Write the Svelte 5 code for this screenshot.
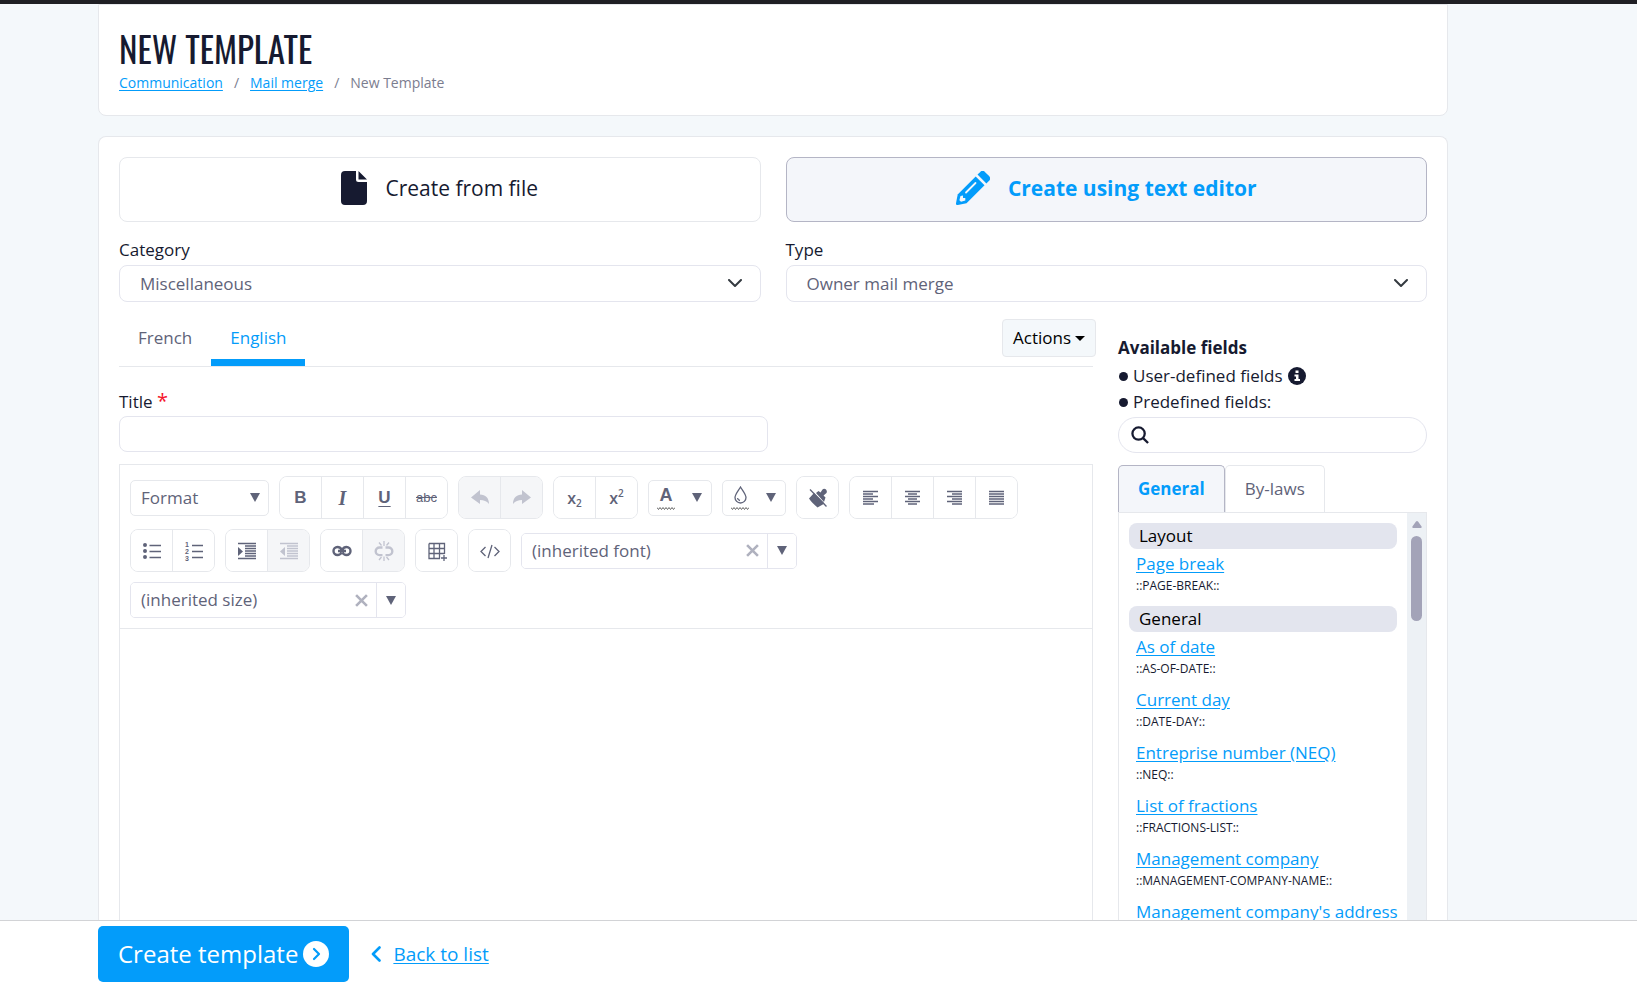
<script>
  let category = $state('Miscellaneous');
  let type = $state('Owner mail merge');
  let mode = $state('editor');
  let language = $state('English');
  let title = $state('');
  let search = $state('');
  let fieldTab = $state('General');

  const fieldGroups = [
    {
      name: 'Layout',
      fields: [{ label: 'Page break', code: '::PAGE-BREAK::' }]
    },
    {
      name: 'General',
      fields: [
        { label: 'As of date', code: '::AS-OF-DATE::' },
        { label: 'Current day', code: '::DATE-DAY::' },
        { label: 'Entreprise number (NEQ)', code: '::NEQ::' },
        { label: 'List of fractions', code: '::FRACTIONS-LIST::' },
        { label: 'Management company', code: '::MANAGEMENT-COMPANY-NAME::' },
        { label: "Management company's address" }
      ]
    }
  ];

  // stroke and fill paths on a 20x20 grid
  const icons = {
    undo: { fill: 'M1 9.5 10 2v4.500c5.500 0 9 3.500 9 9.500-2.500-3-5-4-9-4V16z' },
    redo: { fill: 'M19 9.500 10 2v4.500C4.500 6.500 1 10 1 16c2.500-3 5-4 9-4V16z' },
    bullets: {
      fill: 'M1 4a2 2 0 1 0 4 0a2 2 0 1 0-4 0M1 10a2 2 0 1 0 4 0a2 2 0 1 0-4 0M1 16a2 2 0 1 0 4 0a2 2 0 1 0-4 0',
      stroke: 'M7.500 4.500H19M7.500 10.500H19M7.500 16.500H19'
    },
    numbers: { stroke: 'M8 4.500H19M8 10.500H19M8 16.500H19' },
    indent: { fill: 'M1 6v9l5-4.500z', stroke: 'M1 2.500H19M8 5H19M8 7.500H19M8 10H19M8 12.500H19M8 15H19M1 17.500H19' },
    outdent: { fill: 'M6 6v9l-5-4.500z', stroke: 'M1 2.500H19M8 5H19M8 7.500H19M8 10H19M8 12.500H19M8 15H19M1 17.500H19' },
    link: {
      bold: 'M9.500 8.500C8.500 6.500 8 6 5.500 6a4 4 0 0 0 0 8c2.500 0 3-.5 4-2.500M10.500 8.500C11.500 6.500 12 6 14.500 6a4 4 0 0 1 0 8c-2.500 0-3-.5-4-2.500M6 10h8'
    },
    unlink: {
      bold: 'M8.500 6.500H5.500a3.800 3.800 0 0 0 0 7.600h3M11.500 6.500h3a3.800 3.800 0 0 1 0 7.600h-3',
      stroke: 'M10 0v5M5 1.500l2.500 3M15 1.500l-2.500 3M10 15.500v4.500M5 19l2.500-3M15 19l-2.500-3'
    },
    table: { stroke: 'M2 2.500H17.500V13M13 17.500H2V2.500M2 7.500H17.500M2 12.500H17.500M7 2.500V17.500M12.500 2.500V17.500M17 14v6M14 17h6' },
    code: { stroke: 'M5.500 6 1 10.500l4.500 4.500M14.500 6 19 10.500 14.500 15M12 4 8 17' },
    left: { stroke: 'M2 3.500H17M2 6H12M2 8.500H17M2 11H12M2 13.500H17M2 16H13' },
    center: { stroke: 'M2 3.500H17M5 6H14M2 8.500H17M5 11H14M2 13.500H17M5 16H14' },
    right: { stroke: 'M2 3.500H17M7 6H17M2 8.500H17M7 11H17M2 13.500H17M7 16H17' },
    justify: { stroke: 'M2 3.500H17M2 6H17M2 8.500H17M2 11H17M2 13.500H17M2 16H17' },
    clean: {
      fill: 'M1 10.500 6 5l10.500 10.500-7 4C7.500 17.500 5 16 1 10.500zM8 5l2.500-2 2 1.500 2-3c2-2 5.500.5 4 3.500l-3 2.500 2 2-1.500 4.500z',
      stroke: 'M2 1.500 18.500 18.500'
    }
  };

  const row = (names, disabled = []) => names.map((name) => ({ name, disabled: disabled.includes(name) }));
  const history = row(['undo', 'redo'], ['undo', 'redo']);
  const aligns = row(['left', 'center', 'right', 'justify']);
  const lists = row(['bullets', 'numbers']);
  const indents = row(['indent', 'outdent'], ['outdent']);
  const links = row(['link', 'unlink'], ['unlink']);
  const table = row(['table']);
  const code = row(['code']);
  const clean = row(['clean']);
</script>

{#snippet icon(name)}
  <svg class="icon" viewBox="0 0 20 20" aria-hidden="true">
    {#if icons[name].fill}<path d={icons[name].fill} fill="currentColor" />{/if}
    {#if icons[name].stroke}<path d={icons[name].stroke} fill="none" stroke="currentColor" stroke-width="1.3" />{/if}
    {#if icons[name].bold}<path d={icons[name].bold} fill="none" stroke="currentColor" stroke-width="2.4" />{/if}
    {#if name === 'numbers'}
      <g class="digits"><text x="1" y="6">1</text><text x="1" y="13">2</text><text x="1" y="20">3</text></g>
    {/if}
  </svg>
{/snippet}

{#snippet group(items)}
  <div class="group">
    {#each items as item}
      <button type="button" class="tool" disabled={item.disabled} aria-label={item.name}>{@render icon(item.name)}</button>
    {/each}
  </div>
{/snippet}

{#snippet triangle()}
  <svg class="triangle" viewBox="0 0 10 9" aria-hidden="true"><path d="M0 0h10L5 9z" fill="currentColor" /></svg>
{/snippet}

{#snippet wave()}
  <svg class="wave" viewBox="0 0 18 3" aria-hidden="true">
    <path d="M0 .5l1.500 2 1.500-2 1.500 2 1.500-2 1.500 2 1.500-2 1.500 2 1.500-2 1.500 2 1.500-2 1.500 2 1.500-2" fill="none" stroke="#666" stroke-width="1" />
  </svg>
{/snippet}

{#snippet combo(value, label)}
  <div class="combo">
    <input type="text" {value} aria-label={label} />
    <button type="button" class="clear" aria-label="clear">
      <svg viewBox="0 0 12 12" aria-hidden="true"><path d="M1 1l10 10M11 1 1 11" stroke="currentColor" stroke-width="2.400" /></svg>
    </button>
    <button type="button" class="open" aria-label="open">{@render triangle()}</button>
  </div>
{/snippet}

{#snippet chevron()}
  <svg class="chevron" viewBox="0 0 14 9" aria-hidden="true"><path d="M1 1l6 6 6-6" fill="none" stroke="#343a40" stroke-width="2" stroke-linecap="round" stroke-linejoin="round" /></svg>
{/snippet}

<div class="page">
  <div class="content">
    <header class="card heading">
      <h1>NEW TEMPLATE</h1>
      <nav class="breadcrumb">
        <a href="#communication">Communication</a>
        <span>/</span>
        <a href="#mail-merge">Mail merge</a>
        <span>/</span>
        <span>New Template</span>
      </nav>
    </header>

    <main class="card main">
      <div class="columns">
        <button type="button" class="mode" class:active={mode === 'file'} onclick={() => (mode = 'file')}>
          <svg class="file" viewBox="0 0 26 34" aria-hidden="true">
            <path d="M4 0h11v8.500A2.500 2.500 0 0 0 17.500 11H26v19a4 4 0 0 1-4 4H4a4 4 0 0 1-4-4V4a4 4 0 0 1 4-4zM17.500 0 26 8.500h-8.500z" fill="currentColor" />
          </svg>
          Create from file
        </button>
        <button type="button" class="mode" class:active={mode === 'editor'} onclick={() => (mode = 'editor')}>
          <svg class="pencil" viewBox="0 0 34 34" aria-hidden="true">
            <path d="M21.500 3.500 24.300.9a3.300 3.300 0 0 1 4.600 0l4.200 4.200a3.300 3.300 0 0 1 0 4.600l-2.700 2.700z" fill="currentColor" />
            <path d="M19.700 5.500l8.800 8.800L10.500 32.300l-8.700 1.700A1.600 1.600 0 0 1 0 32.200l1.700-8.700z" fill="currentColor" />
            <path d="M19.500 12 10 21.500" stroke="#f4f6fa" stroke-width="1.800" stroke-linecap="round" />
            <path d="M4.500 25 3.400 29.200l1.600 1.500 4.300-1.200V27H7v-2.500z" fill="#f4f6fa" />
          </svg>
          Create using text editor
        </button>

        <div class="field">
          <label for="category">Category</label>
          <div class="select">
            <select id="category" bind:value={category}><option>Miscellaneous</option></select>
            {@render chevron()}
          </div>
        </div>
        <div class="field">
          <label for="type">Type</label>
          <div class="select">
            <select id="type" bind:value={type}><option>Owner mail merge</option></select>
            {@render chevron()}
          </div>
        </div>
      </div>

      <div class="workspace">
        <section class="editor-side">
          <div class="language-bar">
            {#each ['French', 'English'] as name}
              <button type="button" class="language" class:active={language === name} onclick={() => (language = name)}>{name}</button>
            {/each}
            <button type="button" class="actions">
              Actions
              <svg viewBox="0 0 10 5" aria-hidden="true"><path d="M0 0h10L5 5z" fill="currentColor" /></svg>
            </button>
          </div>

          <label class="title-label" for="title">Title <span class="required">*</span></label>
          <input id="title" class="title-input" type="text" bind:value={title} />

          <div class="editor">
            <div class="toolbar">
              <div class="format">
                <select aria-label="Format"><option>Format</option></select>
                {@render triangle()}
              </div>
              <div class="group">
                <button type="button" class="tool bold">B</button>
                <button type="button" class="tool italic">I</button>
                <button type="button" class="tool underline">U</button>
                <button type="button" class="tool strike">abc</button>
              </div>
              {@render group(history)}
              <div class="group">
                <button type="button" class="tool script">x<sub>2</sub></button>
                <button type="button" class="tool script">x<sup>2</sup></button>
              </div>
              <button type="button" class="color" aria-label="Text color">
                <span class="swatch"><b>A</b>{@render wave()}</span>
                {@render triangle()}
              </button>
              <button type="button" class="color" aria-label="Background color">
                <span class="swatch">
                  <svg class="drop" viewBox="0 0 13 18" aria-hidden="true"><path d="M6.500 1C4 5 1 8.500 1 11.500a5.500 5.500 0 0 0 11 0C12 8.500 9 5 6.500 1zM3.500 12a3 3 0 0 0 2.500 2.500" fill="none" stroke="currentColor" stroke-width="1.300" /></svg>
                  {@render wave()}
                </span>
                {@render triangle()}
              </button>
              {@render group(clean)}
              {@render group(aligns)}
              {@render group(lists)}
              {@render group(indents)}
              {@render group(links)}
              {@render group(table)}
              {@render group(code)}
              {@render combo('(inherited font)', 'Font')}
              {@render combo('(inherited size)', 'Size')}
            </div>
            <div class="canvas" contenteditable="true" role="textbox" tabindex="0" aria-label="Template body"></div>
          </div>
        </section>

        <aside class="fields">
          <h2>Available fields</h2>
          <ul>
            <li>
              User-defined fields
              <svg class="info" viewBox="0 0 18 18" aria-hidden="true">
                <circle cx="9" cy="9" r="9" fill="#161a30" />
                <path d="M7.500 3.500h3V6h-3zM6.500 7.500h4v4.500H12v2H6.500v-2H8V9.500H6.500z" fill="#fff" />
              </svg>
            </li>
            <li>Predefined fields:</li>
          </ul>
          <div class="search">
            <svg viewBox="0 0 19 19" aria-hidden="true"><circle cx="8" cy="8" r="6.500" /><path d="M12.500 12.500l5.500 5.500" /></svg>
            <input type="text" aria-label="Search fields" bind:value={search} />
          </div>
          <div class="field-tabs">
            {#each ['General', 'By-laws'] as name}
              <button type="button" class="field-tab" class:active={fieldTab === name} onclick={() => (fieldTab = name)}>{name}</button>
            {/each}
          </div>
          <div class="panel">
            <div class="list">
              {#each fieldGroups as g}
                <h3>{g.name}</h3>
                {#each g.fields as f}
                  <div class="entry">
                    <a href="#field">{f.label}</a>
                    {#if f.code}<code>{f.code}</code>{/if}
                  </div>
                {/each}
              {/each}
            </div>
            <div class="scrollbar">
              <svg viewBox="0 0 10 7" aria-hidden="true"><path d="M5 0q.6 0 1 .6l3.600 5Q10 7 9 7H1Q0 7 .4 5.600L4 .6Q4.400 0 5 0z" fill="#a3a3b8" /></svg>
              <div class="thumb"></div>
            </div>
          </div>
        </aside>
      </div>
    </main>
  </div>

  <footer>
    <button type="submit" class="create">
      Create template
      <svg viewBox="0 0 26 26" aria-hidden="true"><circle cx="13" cy="13" r="13" fill="#fff" /><path d="M11 8l5 5-5 5" fill="none" stroke="#039cfa" stroke-width="2.200" stroke-linecap="round" stroke-linejoin="round" /></svg>
    </button>
    <a class="back" href="#list">
      <svg viewBox="0 0 10 16" aria-hidden="true"><path d="M8.500 1.500 2 8l6.500 6.500" fill="none" stroke="currentColor" stroke-width="2.600" stroke-linecap="round" stroke-linejoin="round" /></svg>
      <span>Back to list</span>
    </a>
  </footer>
</div>

<style>
  :global(body) {
    margin: 0;
    background: #f4f8fb;
  }

  .page {
    --line: #e6e8ec;
    --blue: #039cfa;
    --ink: #161a30;
    --muted: #5f6379;
    display: flex;
    flex-direction: column;
    box-sizing: border-box;
    height: 100vh;
    border-top: 4px solid #1f1f24;
    font-family: 'Open Sans', 'Noto Sans', sans-serif;
    font-size: 17px;
    line-height: 26px;
    color: var(--ink);
  }

  .page :global(*) {
    box-sizing: border-box;
  }

  button,
  input,
  select {
    margin: 0;
    padding: 0;
    font: inherit;
    color: inherit;
    background: #fff;
    border: 1px solid var(--line);
  }

  svg {
    display: block;
    flex: none;
  }

  a {
    color: var(--blue);
    text-underline-offset: 2px;
  }

  .content {
    display: flex;
    flex-direction: column;
    gap: 20px;
    flex: 1;
    min-height: 0;
    overflow: hidden;
    padding: 0 189px 0 98px;
  }

  .card {
    background: #fff;
    border: 1px solid var(--line);
    border-radius: 8px;
    padding: 20px;
  }

  .heading {
    flex: none;
    border-radius: 0 0 8px 8px;
  }

  h1 {
    margin: 0;
    font-family: Oswald, 'Liberation Sans Narrow', 'Roboto Condensed', 'DejaVu Sans Condensed', sans-serif;
    font-size: 35px;
    line-height: 46px;
    font-weight: 400;
  }

  .breadcrumb {
    display: flex;
    gap: 11px;
    font-size: 14px;
    line-height: 24px;
    color: #7b7d8f;
  }

  .main {
    display: flex;
    flex-direction: column;
    flex: 1;
    min-height: 0;
    border-bottom: 0;
    border-radius: 8px 8px 0 0;
    padding-bottom: 0;
  }

  .columns {
    display: grid;
    grid-template-columns: 1fr 1fr;
    column-gap: 25px;
    row-gap: 14px;
  }

  .mode {
    display: flex;
    align-items: center;
    justify-content: center;
    gap: 18px;
    height: 65px;
    padding-bottom: 4px;
    border-radius: 8px;
    font-size: 21px;
  }

  .mode.active {
    color: var(--blue);
    font-weight: 700;
    background: #f4f6fa;
    border-color: #b4b5c5;
  }

  .file {
    width: 26px;
    height: 34px;
  }

  .pencil {
    width: 34px;
    height: 34px;
  }

  .field label {
    display: block;
    margin-bottom: 2px;
    line-height: 27px;
  }

  .select,
  .format {
    display: grid;
    align-items: center;
  }

  .select > :global(*),
  .format > :global(*) {
    grid-area: 1 / 1;
  }

  .select select {
    width: 100%;
    height: 37px;
    padding: 0 20px;
    appearance: none;
    border-color: #e4e5ee;
    border-radius: 8px;
    color: var(--muted);
  }

  .chevron {
    justify-self: end;
    width: 14px;
    height: 9px;
    margin-right: 19px;
    pointer-events: none;
  }

  .workspace {
    display: grid;
    grid-template-columns: minmax(0, 974px) minmax(0, 309px);
    justify-content: space-between;
    flex: 1;
    min-height: 0;
    padding-top: 17px;
  }

  .editor-side {
    display: flex;
    flex-direction: column;
    min-height: 0;
  }

  .language-bar {
    display: flex;
    align-items: flex-start;
    height: 48px;
    border-bottom: 1px solid var(--line);
  }

  .language {
    height: 47px;
    padding: 0 19px 9px;
    border: 0;
    color: var(--muted);
  }

  .language.active {
    padding-bottom: 2px;
    border-bottom: 7px solid var(--blue);
    color: var(--blue);
  }

  .actions {
    display: flex;
    align-items: center;
    gap: 4px;
    height: 38px;
    margin: 0 -3px 0 auto;
    padding: 0 10px;
    background: #f4f8fb;
    border-radius: 4px;
    color: #000;
  }

  .actions svg {
    width: 10px;
    height: 5px;
  }

  .title-label {
    padding-top: 20px;
    line-height: 29px;
  }

  .required {
    color: #f5132b;
    font-size: 20px;
    line-height: 20px;
  }

  .title-input {
    width: 649px;
    max-width: 100%;
    height: 36px;
    padding: 0 12px;
    border-color: #e4e5ee;
    border-radius: 8px;
  }

  .editor {
    display: flex;
    flex-direction: column;
    flex: 1;
    min-height: 0;
    margin-top: 12px;
    border: 1px solid var(--line);
    border-bottom: 0;
    color: var(--muted);
  }

  .toolbar {
    display: flex;
    flex-wrap: wrap;
    align-items: center;
    gap: 10px;
    padding: 11px 10px 10px;
    border-bottom: 1px solid var(--line);
  }

  .format select {
    width: 139px;
    height: 36px;
    padding: 0 10px;
    appearance: none;
    border-radius: 5px;
  }

  .triangle {
    width: 10px;
    height: 9px;
  }

  .format :global(.triangle) {
    justify-self: end;
    margin-right: 9px;
    pointer-events: none;
  }

  .group {
    display: flex;
    border: 1px solid var(--line);
    border-radius: 8px;
    overflow: hidden;
  }

  .tool {
    display: flex;
    align-items: center;
    justify-content: center;
    width: 41px;
    height: 41px;
    border: 0;
  }

  .tool + .tool {
    width: 42px;
    border-left: 1px solid var(--line);
  }

  .tool:disabled {
    color: #c1c3cf;
    background: #f5f6f8;
  }

  .icon {
    width: 20px;
    height: 20px;
  }

  .digits {
    font-family: 'Liberation Sans', sans-serif;
    font-size: 7px;
    font-weight: 700;
    fill: currentColor;
  }

  .bold,
  .underline {
    font-family: 'Liberation Sans', sans-serif;
    font-weight: 700;
  }

  .underline {
    text-decoration: underline;
    text-underline-offset: 3px;
  }

  .italic {
    font-family: 'Liberation Serif', serif;
    font-size: 20px;
    font-style: italic;
    font-weight: 700;
  }

  .strike {
    font-family: 'Liberation Sans', sans-serif;
    font-size: 13px;
    text-decoration: line-through;
  }

  .script {
    font-size: 16px;
    font-weight: 600;
  }

  .script sub,
  .script sup {
    font-size: 10px;
    line-height: 10px;
  }

  .script sub {
    padding-top: 10px;
  }

  .script sup {
    padding-bottom: 10px;
  }

  .color {
    display: flex;
    align-items: center;
    justify-content: space-between;
    width: 64px;
    height: 36px;
    padding: 0 9px 0 8px;
    border-radius: 5px;
  }

  .swatch {
    display: flex;
    flex-direction: column;
    align-items: center;
    gap: 3px;
  }

  .swatch b {
    font-family: 'Liberation Sans', sans-serif;
    font-size: 18px;
    line-height: 18px;
  }

  .drop {
    width: 13px;
    height: 18px;
  }

  .wave {
    width: 18px;
    height: 3px;
  }

  .combo {
    display: flex;
    width: 276px;
    height: 36px;
    border: 1px solid #e4e5ee;
    border-radius: 5px;
    overflow: hidden;
  }

  .combo input {
    flex: 1;
    min-width: 0;
    padding: 0 10px;
    border: 0;
  }

  .combo button {
    display: flex;
    align-items: center;
    justify-content: center;
    width: 29px;
    border: 0;
  }

  .combo .clear {
    color: #b0b2bf;
  }

  .clear svg {
    width: 13px;
    height: 13px;
  }

  .combo .open {
    border-left: 1px solid #e4e5ee;
  }

  .canvas {
    flex: 1;
    min-height: 0;
    outline: 0;
  }

  .fields {
    display: flex;
    flex-direction: column;
    min-height: 0;
    padding-top: 15px;
  }

  h2 {
    margin: 0 0 2px;
    font-size: 17px;
    line-height: 27px;
    font-weight: 700;
  }

  ul {
    margin: 0 0 2px;
    padding: 0;
    list-style: none;
  }

  li {
    display: flex;
    align-items: center;
    gap: 5px;
  }

  li::before {
    content: '';
    width: 9px;
    height: 9px;
    margin-left: 1px;
    border-radius: 50%;
    background: var(--ink);
  }

  .info {
    width: 18px;
    height: 18px;
  }

  .search {
    display: flex;
    align-items: center;
    flex: none;
    gap: 8px;
    height: 36px;
    padding: 0 12px;
    border: 1px solid #e4e5ee;
    border-radius: 18px;
  }

  .search svg {
    width: 18px;
    height: 18px;
    fill: none;
    stroke: var(--ink);
    stroke-width: 2.4;
  }

  .search input {
    flex: 1;
    min-width: 0;
    border: 0;
    outline: 0;
  }

  .field-tabs {
    display: flex;
    flex: none;
    margin-top: 12px;
  }

  .field-tab {
    height: 47px;
    padding: 0 19px;
    border-bottom: 0;
    border-radius: 5px 5px 0 0;
    color: var(--muted);
  }

  .field-tab.active {
    background: #f4f6fa;
    border-color: #b4b5c5;
    color: var(--blue);
    font-weight: 700;
  }

  .panel {
    display: flex;
    flex: 1;
    min-height: 0;
    border: 1px solid var(--line);
    border-bottom: 0;
  }

  .list {
    flex: 1;
    min-width: 0;
    padding: 10px;
    overflow: hidden;
  }

  h3 {
    margin: 0 0 4px;
    padding: 0 10px;
    font-size: 17px;
    line-height: 26px;
    font-weight: 400;
    color: #000;
    background: #e3e5ee;
    border-radius: 8px;
  }

  .entry {
    display: flex;
    flex-direction: column;
    align-items: flex-start;
    padding: 0 0 9px 7px;
    line-height: 22px;
    white-space: nowrap;
  }

  code {
    font-family: inherit;
    font-size: 12px;
  }

  .scrollbar {
    display: flex;
    flex-direction: column;
    align-items: center;
    gap: 8px;
    width: 19px;
    padding-top: 8px;
    background: #edf1f5;
  }

  .scrollbar svg {
    width: 10px;
    height: 7px;
  }

  .thumb {
    width: 11px;
    height: 85px;
    border-radius: 6px;
    background: #a3a3b8;
  }

  footer {
    display: flex;
    align-items: center;
    flex: none;
    gap: 22px;
    height: 67px;
    padding: 0 98px;
    background: #fff;
    border-top: 1px solid #d2d3d6;
  }

  .create {
    display: flex;
    align-items: center;
    gap: 5px;
    height: 56px;
    padding: 0 20px;
    border: 0;
    border-radius: 5px;
    background: var(--blue);
    color: #fff;
    font-size: 24px;
  }

  .create svg {
    width: 26px;
    height: 26px;
  }

  .back {
    display: flex;
    align-items: center;
    gap: 12px;
    font-size: 19px;
    text-decoration: none;
  }

  .back span {
    text-decoration: underline;
  }

  .back svg {
    width: 10px;
    height: 16px;
  }
</style>
